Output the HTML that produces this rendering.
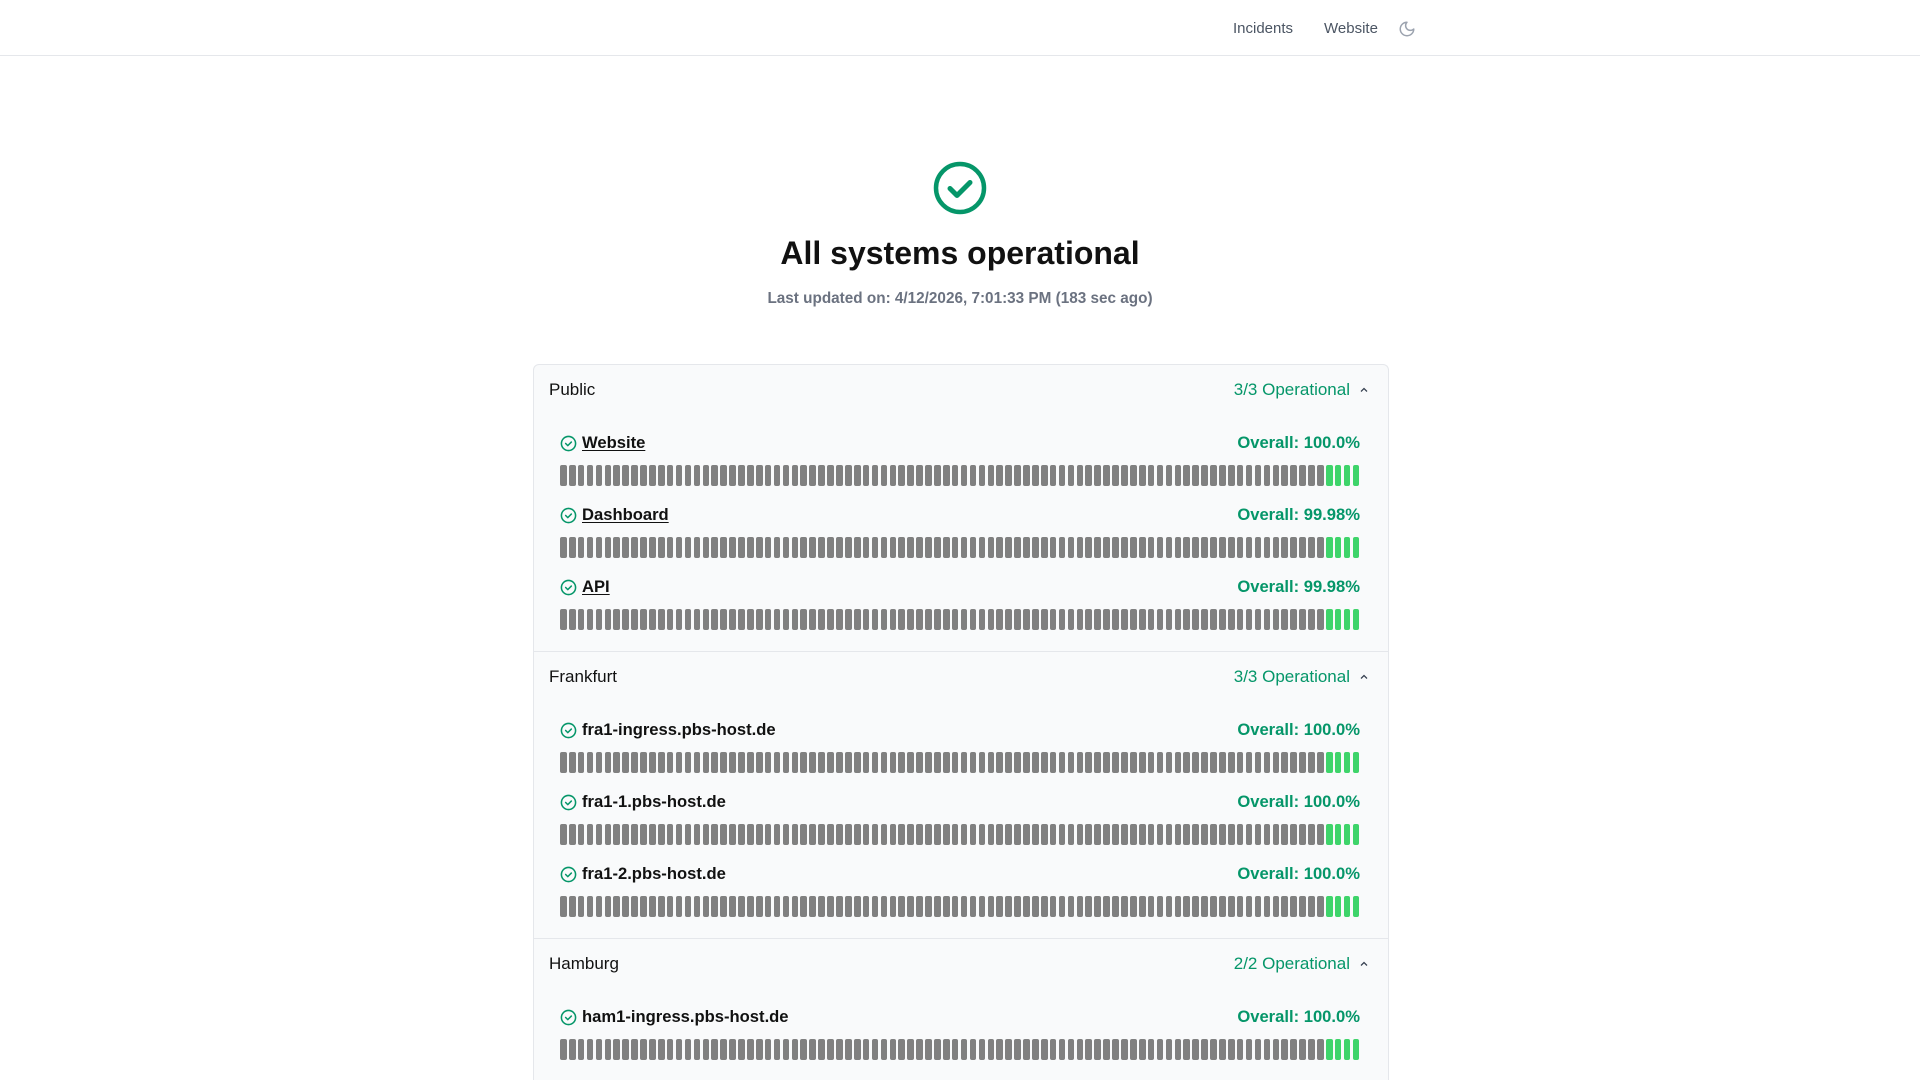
<!DOCTYPE html>
<html><head><meta charset="utf-8"><style>
*{box-sizing:border-box;margin:0;padding:0}
html,body{width:1920px;height:1080px;overflow:hidden}
body{background:#fff;font-family:"Liberation Sans",Arial,sans-serif;color:#111}
#wrap{position:relative;width:1920px;height:1080px;overflow:hidden}
.top{height:56px;border-bottom:1px solid #e5e7eb;position:relative}
.nav{position:absolute;top:1px;height:55px;display:flex;align-items:center;font-size:15px;color:#4b5563}
.card{position:absolute;left:533px;top:364px;width:856px;height:716px;border:1px solid #e5e7eb;border-bottom:none;border-radius:6px 6px 0 0;background:#f9fafb;overflow:hidden}
.gh{height:50px;display:flex;align-items:center;justify-content:space-between;padding:0 18px 0 15px;font-size:17px}
.gh .op{color:#059669;display:flex;align-items:center;gap:8px}
.grp{border-bottom:1px solid #e5e7eb;padding-bottom:4px}
.items{padding:16px 28px 0 26px}
.it{height:72px}
.nm{height:24px;display:flex;align-items:center;justify-content:space-between;font-weight:bold;font-size:16.6px}
.nm .l{display:flex;align-items:center;gap:5px}
.nm u{text-underline-offset:2px}
.nm .r{color:#059669}
.bars{margin-top:10px;height:21px;display:flex;justify-content:space-between}
.bars i{display:block;width:6.6px;height:21px;border-radius:2px;background:#808080}
.bars i.g{background:#3ed46a}
</style></head><body><div id="wrap">
<div class="top">
<div class="nav" style="left:1233px">Incidents</div>
<div class="nav" style="left:1324px">Website</div>
<div class="nav" style="left:1398px"><svg width="18" height="18" viewBox="0 0 24 24" fill="none" stroke="#9ca3af" stroke-width="2" stroke-linecap="round" stroke-linejoin="round"><path d="M12 3a6 6 0 0 0 9 9 9 9 0 1 1-9-9Z"/></svg></div>
</div>
<svg style="position:absolute;left:933px;top:161px" width="54" height="54" viewBox="0 0 54 54"><circle cx="27" cy="27" r="24" fill="none" stroke="#059669" stroke-width="4.5"/><path d="M17 27.5l7 7 13-13" fill="none" stroke="#059669" stroke-width="5" stroke-linecap="round" stroke-linejoin="round"/></svg>
<div style="position:absolute;left:0;width:1920px;top:235px;text-align:center;font-size:32px;font-weight:bold">All systems operational</div>
<div style="position:absolute;left:0;width:1920px;top:290px;text-align:center;font-size:15.3px;font-weight:bold;color:#6b7280">Last updated on: 4/12/2026, 7:01:33 PM (183 sec ago)</div>
<div class="card" id="card"></div>
</div>
<script>
const chk='<svg width="17" height="17" viewBox="0 0 24 24" fill="none" stroke="#059669" stroke-width="2.2" stroke-linecap="round" stroke-linejoin="round"><circle cx="12" cy="12" r="10"/><path d="M8 12l3 3 5-5"/></svg>';
const chev='<svg width="12" height="12" viewBox="0 0 24 24" fill="none" stroke="#374151" stroke-width="2.5"><path d="M6 15l6-6 6 6"/></svg>';
let bars='';for(let i=0;i<90;i++)bars+='<i'+(i>=86?' class="g"':'')+'></i>';
const G=[["Public","3/3",[["Website","100.0%",1],["Dashboard","99.98%",1],["API","99.98%",1]]],
["Frankfurt","3/3",[["fra1-ingress.pbs-host.de","100.0%"],["fra1-1.pbs-host.de","100.0%"],["fra1-2.pbs-host.de","100.0%"]]],
["Hamburg","2/2",[["ham1-ingress.pbs-host.de","100.0%"]]]];
let h='';for(const g of G){h+='<div class="grp"><div class="gh"><span>'+g[0]+'</span><span class="op">'+g[1]+' Operational '+chev+'</span></div><div class="items">';
for(const it of g[2]){h+='<div class="it"><div class="nm"><span class="l">'+chk+(it[2]?'<u>'+it[0]+'</u>':it[0])+'</span><span class="r">Overall: '+it[1]+'</span></div><div class="bars">'+bars+'</div></div>';}
h+='</div></div>';}
document.getElementById('card').innerHTML=h;
</script>
</body></html>
